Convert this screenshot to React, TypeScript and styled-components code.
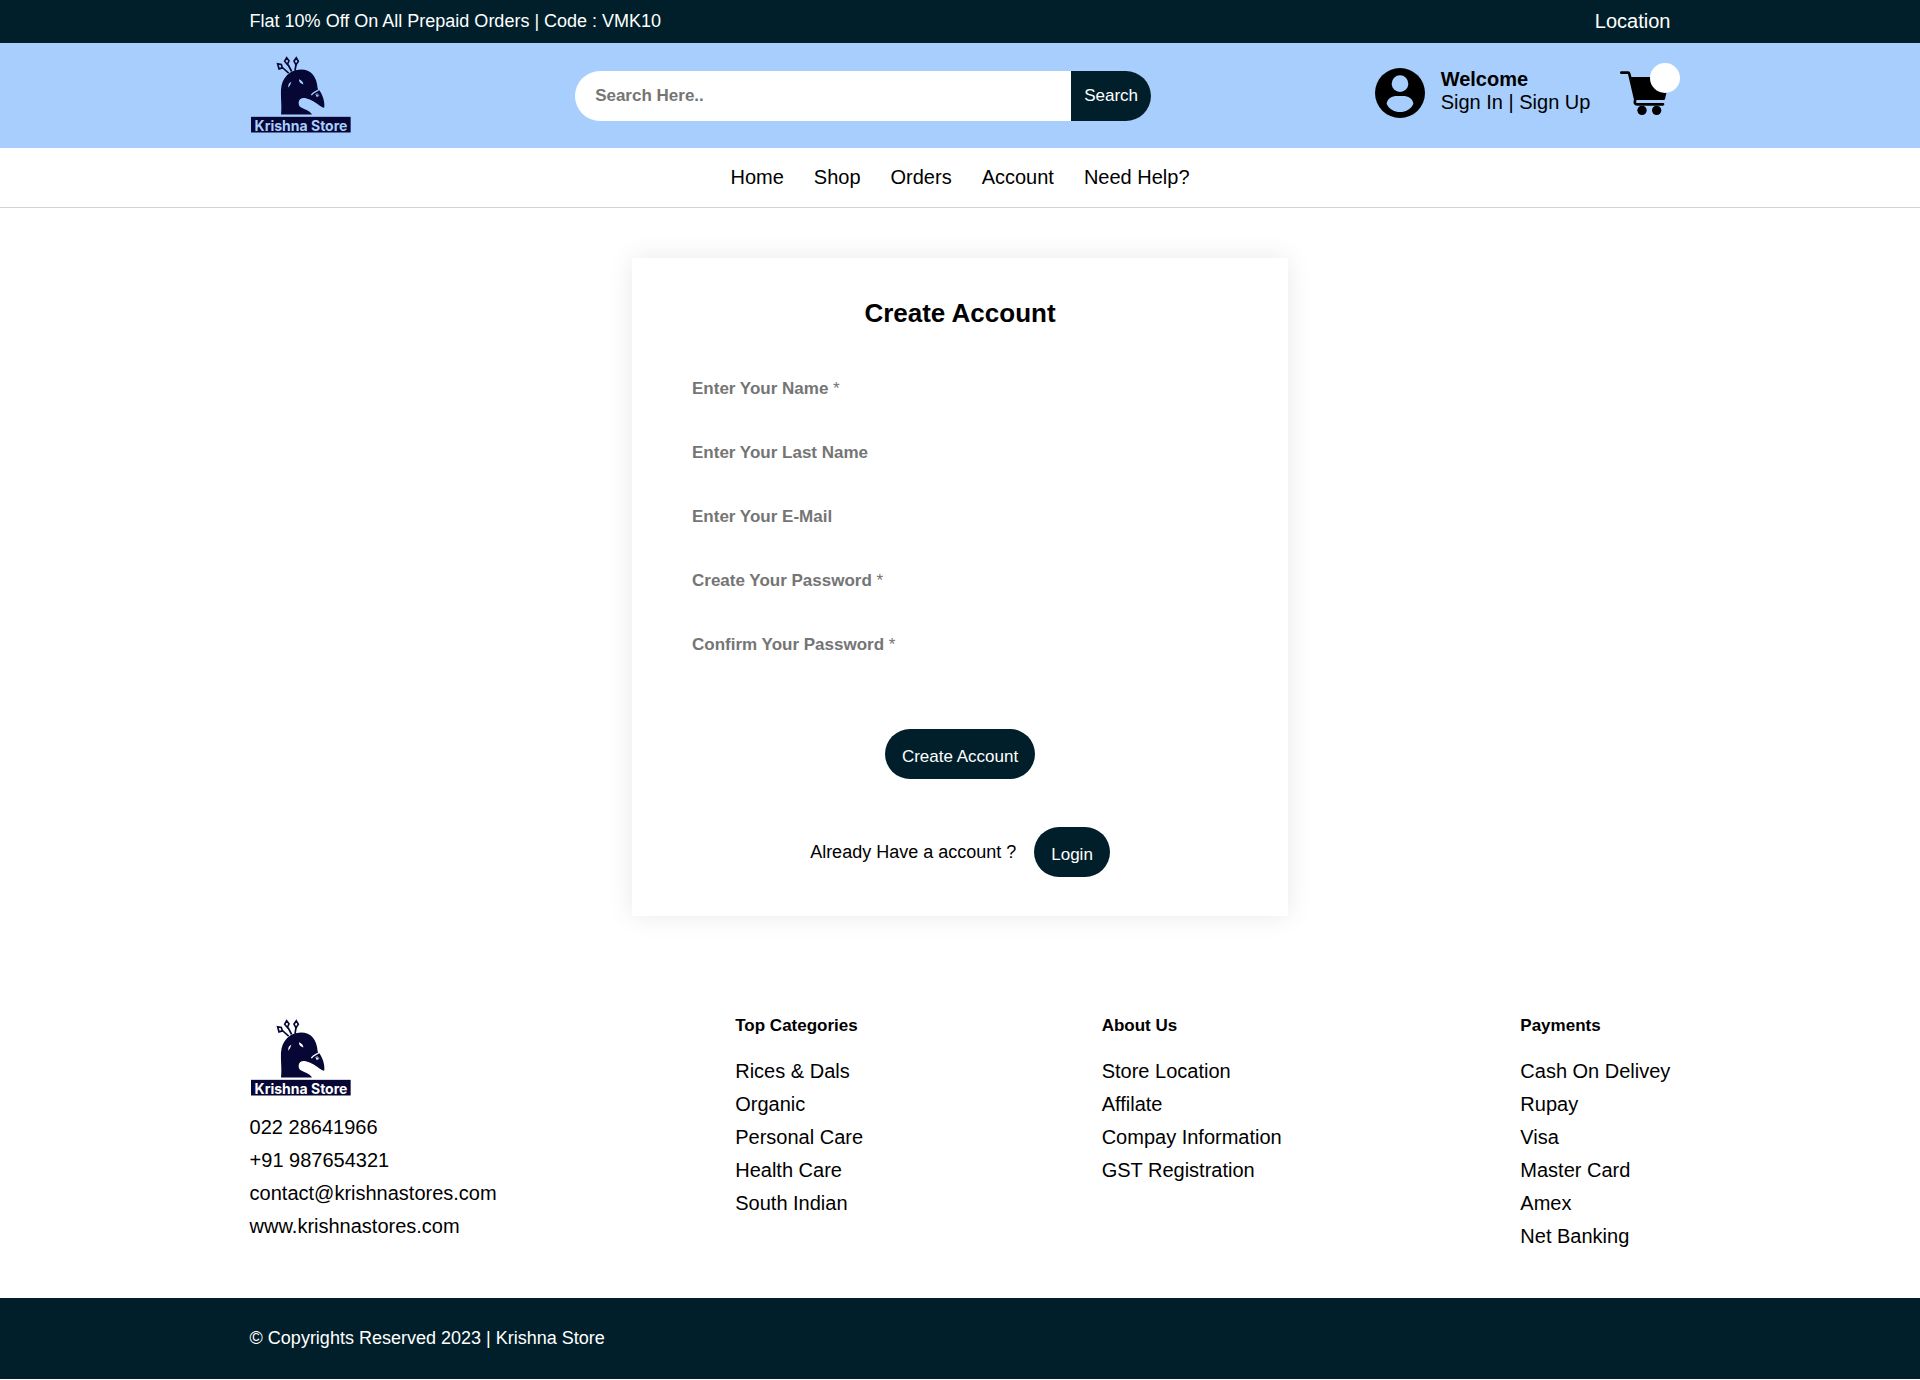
import React from "react";
import styled, { createGlobalStyle } from "styled-components";

const navy = "#001f2a";
const sky = "#a8cefd";
const ink = "#060735";

const GlobalStyle = createGlobalStyle`
  *, *::before, *::after { box-sizing: border-box; }
  body {
    margin: 0;
    background: #fff;
    color: #000;
    font-family: "Liberation Sans", Arial, sans-serif;
    font-size: 20px;
    line-height: 23px;
  }
  h1, h2, p, ul { margin: 0; padding: 0; }
  ul { list-style: none; }
  a { color: inherit; text-decoration: none; }
  button, input { font-family: inherit; }
`;

const TopBar = styled.div`
  display: flex;
  justify-content: space-between;
  align-items: center;
  padding: 10px 13%;
  background: ${navy};
  color: #fff;
`;

const Offer = styled.p`
  font-size: 18px;
`;

const Header = styled.header`
  display: flex;
  justify-content: space-between;
  align-items: center;
  padding: 13px 13% 12px;
  background: ${sky};
`;

const LogoArt = styled.svg`
  display: block;
  width: 102px;
  height: 80px;
`;

const SearchForm = styled.form`
  display: flex;
  width: 30vw;
  height: 50px;
  border-radius: 25px;
  overflow: hidden;
  background: #fff;
`;

const SearchInput = styled.input`
  flex: 1;
  min-width: 0;
  border: 0;
  outline: 0;
  padding: 0 20px;
  font-size: 17px;
  font-weight: 700;
  background: transparent;
  &::placeholder { color: #757575; opacity: 1; }
`;

const SearchButton = styled.button`
  width: 80px;
  padding: 0;
  border: 0;
  background: ${navy};
  color: #fff;
  font-size: 17px;
`;

const AccountArea = styled.div`
  display: flex;
  align-items: center;
  padding-bottom: 7px;
`;

const Icon = styled.svg`
  display: block;
  width: 50px;
  height: 50px;
`;

const AccountText = styled.div`
  margin: 0 30px 4px 16px;
`;

const Welcome = styled.p`
  font-weight: 700;
`;

const CartLink = styled.a`
  position: relative;
`;

const CartBadge = styled.span`
  position: absolute;
  top: -5px;
  right: -10px;
  width: 30px;
  height: 30px;
  border-radius: 50%;
  background: #fff;
`;

const Nav = styled.nav`
  border-bottom: 1px solid #d0d2d3;
`;

const NavList = styled.ul`
  display: flex;
  justify-content: center;
  gap: 30px;
  padding: 18px 0;
`;

const Card = styled.main`
  display: flex;
  flex-direction: column;
  align-items: center;
  width: min(656px, 100%);
  margin: 50px auto 100px;
  padding: 40px 40px 39px;
  background: #fff;
  box-shadow: 0 0 25px rgba(0, 0, 0, 0.09);
`;

const Title = styled.h1`
  font-size: 26px;
  line-height: 30px;
`;

const Form = styled.form`
  display: flex;
  flex-direction: column;
  align-items: center;
  gap: 14px;
  width: 100%;
  padding: 35px 0 48px;
`;

const Field = styled.label`
  display: grid;
  align-items: center;
  width: 100%;
  height: 50px;
  font-size: 17px;
  color: #757575;
`;

const FieldLabel = styled.span`
  grid-area: 1 / 1;
  padding: 0 20px;
  pointer-events: none;
`;

const FieldInput = styled.input`
  grid-area: 1 / 1;
  width: 100%;
  height: 50px;
  border: 0;
  outline: 0;
  border-radius: 25px;
  padding: 0 20px;
  background: transparent;
  font-size: 17px;
`;

const PillButton = styled.button`
  height: 50px;
  padding: 5px 17px 0;
  border: 0;
  border-radius: 25px;
  background: ${navy};
  color: #fff;
  font-size: 17px;
`;

const SubmitRow = styled.div`
  padding-top: 46px;
`;

const LoginRow = styled.div`
  display: flex;
  align-items: center;
  gap: 18px;
  font-size: 18px;
`;

const FooterColumns = styled.div`
  display: flex;
  justify-content: space-between;
  align-items: flex-start;
  padding: 0 13% 50px;
`;

const FooterHeading = styled.h2`
  margin-bottom: 24px;
  font-size: 17px;
  line-height: 20px;
`;

const FooterList = styled.ul`
  display: flex;
  flex-direction: column;
  gap: 10px;
`;

const Contact = styled.div`
  display: flex;
  flex-direction: column;
  gap: 17px;
  padding-top: 3px;
`;

const Copyright = styled.p`
  padding: 29px 13%;
  background: ${navy};
  color: #fff;
  font-size: 18px;
`;

function Logo({ cutout }: { cutout: string }) {
  return (
    <LogoArt viewBox="0 0 102 80" role="img" aria-label="Krishna Store">
      <g transform="translate(1 0.5) scale(0.3333)">
        <g fill="none" stroke={ink} strokeWidth="5">
          <path d="M113 50 L94 33 M122 45 L111 24 M132 43 L135 24" />
          <path d="M80 22 L91 24 L94 34 L84 37 Z M107 4 L114 13 L109 24 L101 14 Z M136 4 L142 14 L135 25 L129 14 Z" />
        </g>
        <path
          fill={ink}
          d="M90 174 C93 150 89 130 90 100 C92 64 116 39 150 39 C180 39 198 60 200 96 C212 107 222 132 220 152 L217 154 C204 147 194 136 176 129 C158 120 143 124 143 139 C142 160 172 155 183 174 Z"
        />
        <path d="M181 116 C188 105 195 107 205 98" fill="none" stroke={cutout} strokeWidth="4" />
        <path d="M193 114 Q201 108 204 117 Q201 122 195 118" fill="none" stroke={cutout} strokeWidth="2" />
        <circle cx="198" cy="117" r="3" fill={cutout} />
        <path d="M121 76 Q110 81 112 94 Q118 88 121 76 Z M144 68 Q143 79 157 84 Q157 73 144 68 Z" fill={cutout} />
        <rect y="181" width="299" height="47" fill={ink} />
      </g>
      <text
        x="51"
        y="75"
        textAnchor="middle"
        fill={cutout}
        fontFamily="Inter, sans-serif"
        fontWeight="700"
        fontSize="14"
      >
        Krishna Store
      </text>
    </LogoArt>
  );
}

function UserIcon() {
  return (
    <Icon viewBox="0 0 150 150" aria-hidden="true">
      <circle cx="75" cy="75" r="75" />
      <circle cx="75" cy="47" r="25" fill={sky} />
      <path
        fill={sky}
        d="M35 108 C36 92 51 84 66 84 H84 C99 84 114 92 115 108 C106 125 92 132 75 132 S44 125 35 108 Z"
      />
    </Icon>
  );
}

function CartIcon() {
  return (
    <Icon viewBox="0 0 150 150" aria-hidden="true">
      <path
        d="M4 14 H24 Q27 14 28 18 L46 95 Q41 109 52 109 H129"
        fill="none"
        stroke="#000"
        strokeWidth="8"
        strokeLinecap="round"
      />
      <path d="M31 27 H150 L135 93 Q134 96 131 96 H47 Z" />
      <circle cx="66" cy="127" r="14" />
      <circle cx="110" cy="127" r="14" />
    </Icon>
  );
}

const navItems = ["Home", "Shop", "Orders", "Account", "Need Help?"];

const fields = [
  { id: "first-name", label: "Enter Your Name", required: true, type: "text" },
  { id: "last-name", label: "Enter Your Last Name", required: false, type: "text" },
  { id: "email", label: "Enter Your E-Mail", required: false, type: "email" },
  { id: "password", label: "Create Your Password", required: true, type: "password" },
  { id: "confirm", label: "Confirm Your Password", required: true, type: "password" },
];

const contacts = ["022 28641966", "+91 987654321", "contact@krishnastores.com", "www.krishnastores.com"];

const columns = [
  { title: "Top Categories", items: ["Rices & Dals", "Organic", "Personal Care", "Health Care", "South Indian"] },
  { title: "About Us", items: ["Store Location", "Affilate", "Compay Information", "GST Registration"] },
  { title: "Payments", items: ["Cash On Delivey", "Rupay", "Visa", "Master Card", "Amex", "Net Banking"] },
];

function LinkList({ items }: { items: string[] }) {
  return (
    <FooterList>
      {items.map((item) => (
        <li key={item}>
          <a href="#">{item}</a>
        </li>
      ))}
    </FooterList>
  );
}

export default function App() {
  return (
    <>
      <GlobalStyle />
      <TopBar>
        <Offer>Flat 10% Off On All Prepaid Orders | Code : VMK10</Offer>
        <a href="#">Location</a>
      </TopBar>
      <Header>
        <a href="#">
          <Logo cutout={sky} />
        </a>
        <SearchForm role="search" onSubmit={(e) => e.preventDefault()}>
          <SearchInput type="text" aria-label="Search" placeholder="Search Here.." />
          <SearchButton type="submit">Search</SearchButton>
        </SearchForm>
        <AccountArea>
          <UserIcon />
          <AccountText>
            <Welcome>Welcome</Welcome>
            <a href="#">Sign In</a> | <a href="#">Sign Up</a>
          </AccountText>
          <CartLink href="#" aria-label="Cart">
            <CartIcon />
            <CartBadge />
          </CartLink>
        </AccountArea>
      </Header>
      <Nav>
        <NavList>
          {navItems.map((item) => (
            <li key={item}>
              <a href="#">{item}</a>
            </li>
          ))}
        </NavList>
      </Nav>
      <Card>
        <Title>Create Account</Title>
        <Form onSubmit={(e) => e.preventDefault()}>
          {fields.map((field) => (
            <Field key={field.id} htmlFor={field.id}>
              <FieldLabel>
                <b>{field.label}</b>
                {field.required && " *"}
              </FieldLabel>
              <FieldInput id={field.id} type={field.type} />
            </Field>
          ))}
          <SubmitRow>
            <PillButton type="submit">Create Account</PillButton>
          </SubmitRow>
        </Form>
        <LoginRow>
          <p>Already Have a account ?</p>
          <PillButton type="button">Login</PillButton>
        </LoginRow>
      </Card>
      <footer>
        <FooterColumns>
          <Contact>
            <Logo cutout="#fff" />
            <LinkList items={contacts} />
          </Contact>
          {columns.map((column) => (
            <div key={column.title}>
              <FooterHeading>{column.title}</FooterHeading>
              <LinkList items={column.items} />
            </div>
          ))}
        </FooterColumns>
        <Copyright>© Copyrights Reserved 2023 | Krishna Store</Copyright>
      </footer>
    </>
  );
}
